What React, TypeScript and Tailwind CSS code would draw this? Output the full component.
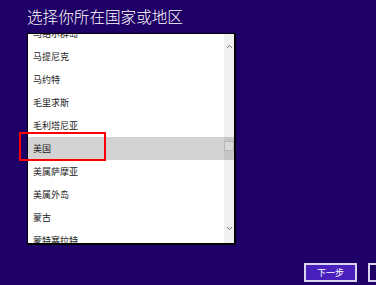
import { ChevronDown, ChevronUp } from "lucide-react";

const countries = [
  "马绍尔群岛",
  "马提尼克",
  "马约特",
  "毛里求斯",
  "毛利塔尼亚",
  "美国",
  "美属萨摩亚",
  "美属外岛",
  "蒙古",
  "蒙特塞拉特",
];

const selected = "美国";

export default function App() {
  return (
    <div
      className="relative w-[376px] h-[285px] overflow-hidden bg-[#1f0066]"
      style={{ fontFamily: '"Noto Sans CJK SC", "Noto Sans", sans-serif' }}
    >
      <h1 className="pl-[27px] pt-[7px] text-[15.6px] leading-[18px] font-light text-white">
        选择你所在国家或地区
      </h1>

      <div className="relative ml-[27px] mt-[8px] w-[209px] h-[212px] overflow-hidden border border-black border-r-2 border-b-2 bg-white">
        <div className="-mt-[12px]">
          {countries.map((c) => (
            <div
              key={c}
              className={`h-[23px] flex items-center pl-[5px] text-[9px] text-[#222] ${
                c === selected ? "bg-[#d3d3d3]" : ""
              }`}
            >
              {c}
            </div>
          ))}
        </div>

        {/* scrollbar, drawn over the list */}
        <div className="absolute inset-y-0 right-0 w-[10px] flex flex-col items-center bg-black/[0.06]">
          <ChevronUp className="mt-[8px] w-[9px] h-[9px] text-[#666]" strokeWidth={2.5} />
          <div className="mt-[90px] w-[10px] h-[10px] border border-[#b5b5b5] bg-[#d8d8d8]" />
          <div className="flex-1" />
          <ChevronDown className="mb-[10px] w-[9px] h-[9px] text-[#666]" strokeWidth={2.5} />
        </div>
      </div>

      <div className="flex gap-[11px] ml-[304px] mt-[18px]">
        <button className="shrink-0 w-[53px] h-[19px] border-2 border-[#d9d4ee] bg-[#4a20bd] text-white text-[9px] leading-none">
          下一步
        </button>
        <button className="shrink-0 w-[53px] h-[19px] border-2 border-[#d9d4ee] bg-[#1f0066] text-white text-[9px] leading-none">
          跳过
        </button>
      </div>

      {/* red highlight box */}
      <div className="absolute left-[19px] top-[132px] w-[87px] h-[29px] border-2 border-[#ff0000]" />
    </div>
  );
}
